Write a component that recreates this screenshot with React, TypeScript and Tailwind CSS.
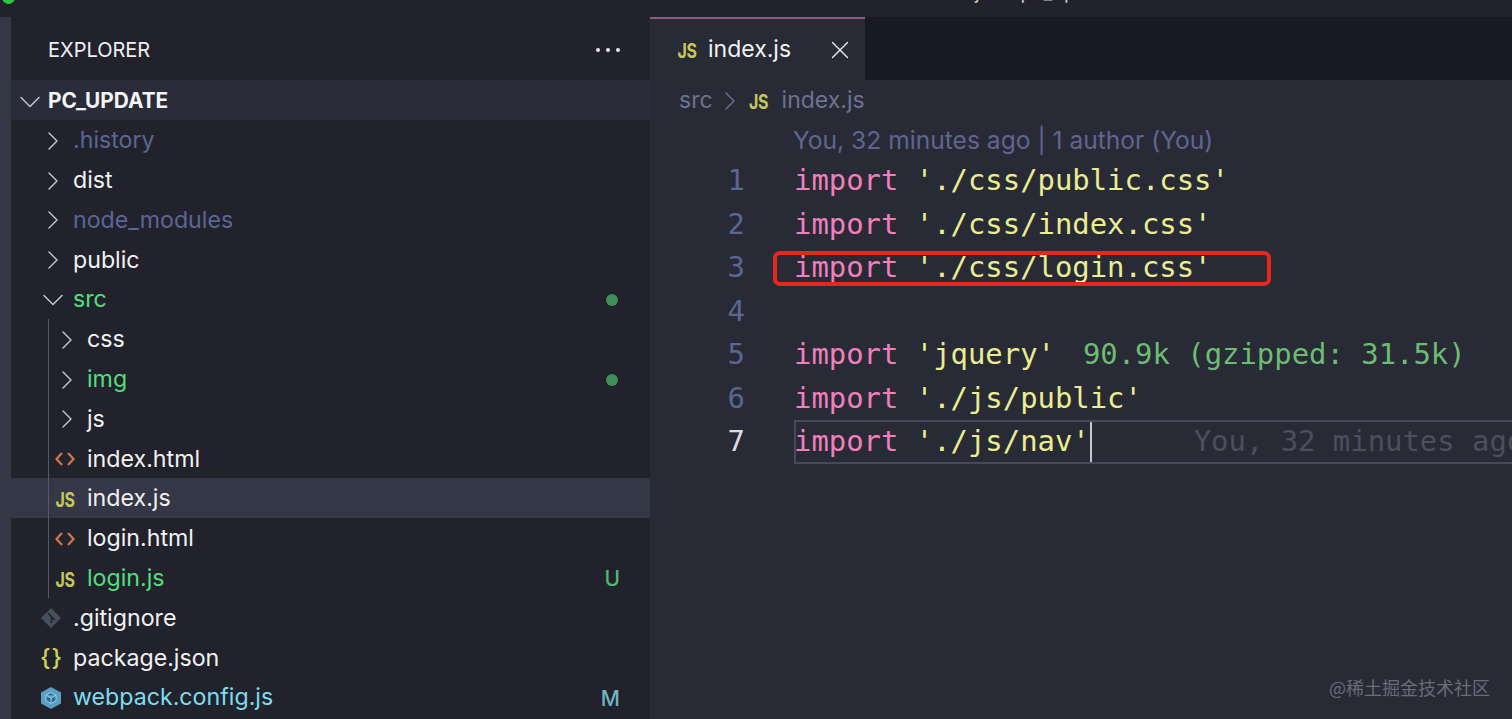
import { ChevronDown, ChevronRight, X } from "lucide-react";

const UI_FONT = "font-['Inter','Liberation_Sans',sans-serif]";

function JsIcon({ className = "" }: { className?: string }) {
  return (
    <span className={`w-[22px] scale-y-125 text-center text-[16px] font-bold leading-none tracking-[-0.3px] text-[#c5c75c] ${className}`}>
      JS
    </span>
  );
}

function HtmlIcon() {
  return (
    <svg width="22" height="18" viewBox="0 0 22 18" fill="none" stroke="#d2764a" strokeWidth="2.2">
      <path d="M8 3 2.5 9 8 15" />
      <path d="M14 3 19.5 9 14 15" />
    </svg>
  );
}

function GitIcon() {
  return (
    <svg width="22" height="22" viewBox="0 0 22 22">
      <path d="M11 1 21 11 11 21 1 11Z" fill="#46505c" />
      <path d="M8 6 11.5 9.5V16M11.5 10 15 13" stroke="#21222c" strokeWidth="1.6" fill="none" />
    </svg>
  );
}

function BracesIcon() {
  return (
    <span className="flex w-[22px] justify-between text-[24px] font-medium leading-none text-[#cfd05a]">
      <span>{"{"}</span>
      <span>{"}"}</span>
    </span>
  );
}

function WebpackIcon() {
  return (
    <svg width="22" height="24" viewBox="0 0 22 24">
      <path d="M11 1 21 6.500V17.500L11 23 1 17.500V6.500Z" fill="#5a9fc4" />
      <path d="M11 6.500 16 9.300V14.800L11 17.500 6 14.800V9.300Z M6 9.300 11 12 16 9.300 M11 12V17.500" fill="#2f6f94" stroke="#a5d6ee" strokeWidth="0.9" />
    </svg>
  );
}

type Row = {
  name: string;
  depth: 0 | 1;
  kind: "closed" | "open" | "html" | "js" | "git" | "json" | "webpack";
  color: string;
  badge?: string;
  badgeColor?: string;
  dot?: boolean;
  selected?: boolean;
};

const ROWS: Row[] = [
  { name: ".history", depth: 0, kind: "closed", color: "text-[#5d6594]" },
  { name: "dist", depth: 0, kind: "closed", color: "text-[#f2f2f2]" },
  { name: "node_modules", depth: 0, kind: "closed", color: "text-[#5d6594]" },
  { name: "public", depth: 0, kind: "closed", color: "text-[#f2f2f2]" },
  { name: "src", depth: 0, kind: "open", color: "text-[#53df7c]", dot: true },
  { name: "css", depth: 1, kind: "closed", color: "text-[#f2f2f2]" },
  { name: "img", depth: 1, kind: "closed", color: "text-[#53df7c]", dot: true },
  { name: "js", depth: 1, kind: "closed", color: "text-[#f2f2f2]" },
  { name: "index.html", depth: 1, kind: "html", color: "text-[#f2f2f2]" },
  { name: "index.js", depth: 1, kind: "js", color: "text-[#f2f2f2]", selected: true },
  { name: "login.html", depth: 1, kind: "html", color: "text-[#f2f2f2]" },
  { name: "login.js", depth: 1, kind: "js", color: "text-[#53df7c]", badge: "U", badgeColor: "text-[#4fb872]" },
  { name: ".gitignore", depth: 0, kind: "git", color: "text-[#f2f2f2]" },
  { name: "package.json", depth: 0, kind: "json", color: "text-[#f2f2f2]" },
  { name: "webpack.config.js", depth: 0, kind: "webpack", color: "text-[#7fdcec]", badge: "M", badgeColor: "text-[#6fb5c2]" },
];

function RowIcon({ kind }: { kind: Row["kind"] }) {
  if (kind === "closed") return <ChevronRight className="ml-[4px] h-[32px] w-[32px] shrink-0 text-[#c6c8d2]" strokeWidth={1.05} />;
  if (kind === "open") return <ChevronDown className="ml-[4px] h-[36px] w-[36px] shrink-0 text-[#c6c8d2]" strokeWidth={0.95} />;
  if (kind === "html") return <HtmlIcon />;
  if (kind === "js") return <JsIcon />;
  if (kind === "git") return <GitIcon />;
  if (kind === "json") return <BracesIcon />;
  return <WebpackIcon />;
}

function TreeRow({ row }: { row: Row }) {
  return (
    <div className={`relative flex h-[39.800px] items-center pr-[30px] pt-[2px] ${row.selected ? "bg-[#343746]" : ""}`}>
      {row.depth === 1 && <span className="absolute left-[37px] top-0 h-full w-[1px] bg-[#565a68]" />}
      <div className={`flex w-[24px] shrink-0 justify-center ${row.depth === 1 ? "ml-[42px]" : "ml-[28px]"}`}>
        <RowIcon kind={row.kind} />
      </div>
      <span className={`ml-[10px] text-[23.200px] leading-none ${row.color}`}>{row.name}</span>
      <div className="flex-1" />
      {row.dot && <span className="mr-[2px] h-[12px] w-[12px] rounded-full bg-[#3f8f5c]" />}
      {row.badge && <span className={`text-[21px] font-medium leading-none ${row.badgeColor}`}>{row.badge}</span>}
    </div>
  );
}

function Sidebar() {
  return (
    <aside className="flex w-[639px] shrink-0 flex-col bg-[#21222c]">
      <div className="flex h-[63px] shrink-0 items-center justify-between pl-[37px] pr-[30px] pt-[2px]">
        <span className="text-[20px] leading-none text-[#f0f0f0]">EXPLORER</span>
        <span className="flex gap-[6px]">
          <i className="h-[4px] w-[4px] rounded-full bg-[#e8e8e8]" />
          <i className="h-[4px] w-[4px] rounded-full bg-[#e8e8e8]" />
          <i className="h-[4px] w-[4px] rounded-full bg-[#e8e8e8]" />
        </span>
      </div>
      <div className="flex h-[40px] shrink-0 items-center bg-[#2a2c39] pl-[7px] pt-[3px]">
        <div className="flex w-[24px] shrink-0 justify-center">
          <ChevronDown className="h-[36px] w-[36px] shrink-0 text-[#c6c8d2]" strokeWidth={0.95} />
        </div>
        <span className="ml-[6px] text-[20.800px] font-bold leading-none text-[#f4f4f4]">PC_UPDATE</span>
      </div>
      {ROWS.map((r) => (
        <TreeRow key={r.name} row={r} />
      ))}
    </aside>
  );
}

function CodeLine({ path, children }: { path: string; children?: React.ReactNode }) {
  return (
    <div className="h-[43.500px] whitespace-pre leading-[43.500px] text-[#e9ee8f]">
      <span className="text-[#f07fbc]">import</span> {path}
      {children}
    </div>
  );
}

function Editor() {
  return (
    <main className="flex min-w-0 flex-1 flex-col bg-[#282a36]">
      <div className="flex h-[63px] shrink-0 bg-[#191a21]">
        <div className="flex w-[215px] items-center border-t-[2px] border-[#8a5a80] bg-[#282a36] pl-[26px]">
          <JsIcon />
          <span className="ml-[10px] text-[23px] leading-none text-[#f2f2f2]">index.js</span>
          <X className="ml-[34px] h-[30px] w-[30px] shrink-0 text-[#e8e8e8]" strokeWidth={1.1} />
        </div>
      </div>
      <div className="flex h-[40px] shrink-0 items-center pl-[29px] pt-[1px] text-[23px] leading-none text-[#6d7391]">
        <span>src</span>
        <ChevronRight className="ml-[1px] h-[32px] w-[32px] shrink-0" strokeWidth={1} />
        <JsIcon className="ml-[2px]" />
        <span className="ml-[12px]">index.js</span>
      </div>
      <div className="h-[39px] shrink-0 pl-[143px] text-[24.600px] leading-[40px] text-[#5f6690]">
        You, 32 minutes ago | 1 author (You)
      </div>
      <div className="relative flex font-['DejaVu_Sans_Mono','Liberation_Mono',monospace] text-[28.900px]">
        <div className="w-[95px] shrink-0 text-right text-[#5d6594]">
          {[1, 2, 3, 4, 5, 6].map((n) => (
            <div key={n} className="h-[43.500px] leading-[43.500px]">
              {n}
            </div>
          ))}
          <div className="h-[43.500px] leading-[43.500px] text-[#dcdcdc]">7</div>
        </div>
        <div className="ml-[49px] min-w-0 flex-1 overflow-hidden">
          <CodeLine path="'./css/public.css'" />
          <CodeLine path="'./css/index.css'" />
          <CodeLine path="'./css/login.css'" />
          <div className="h-[43.500px]" />
          <CodeLine path="'jquery'">
            <span className="ml-[28px] text-[#6cbd72]">90.9k (gzipped: 31.5k)</span>
          </CodeLine>
          <CodeLine path="'./js/public'" />
          <div className="flex h-[43.500px] items-center whitespace-pre border-y-[2px] border-[#474a58] text-[#e9ee8f] shadow-[inset_2px_0_0_#474a58]">
            <span className="shrink-0">
              <span className="text-[#f07fbc]">import</span> './js/nav'
            </span>
            <span className="h-full w-[2px] shrink-0 bg-[#c4c6ce]" />
            <span className="ml-[102px] shrink-0 text-[#4c4f5c]">You, 32 minutes ago</span>
          </div>
        </div>
        {/* annotation drawn over the code */}
        <div className="absolute left-[123px] top-[92px] h-[35px] w-[498px] rounded-[7px] border-[4px] border-[#e5281f]" />
      </div>
    </main>
  );
}

export default function App() {
  return (
    <div className={`relative flex h-[719px] w-[1512px] flex-col overflow-hidden bg-[#21222c] ${UI_FONT}`}>
      <div className="flex h-[17px] shrink-0 items-start justify-center overflow-hidden bg-[#21222c]">
        <span className="ml-[524px] -mt-[20px] text-[19.500px] leading-[24px] text-[#c8c8c8]">index.js — pc_update</span>
      </div>
      <span className="absolute left-[2px] top-[-9px] h-[13px] w-[13px] rounded-full bg-[#2bc840]" />
      <div className="flex min-h-0 flex-1">
        <div className="w-[11px] shrink-0 bg-[#343746]" />
        <Sidebar />
        <Editor />
      </div>
      <span className="absolute right-[22px] top-[676px] font-['Noto_Sans_CJK_SC',sans-serif] text-[18px] leading-[22px] text-[#6a6c76]">
        @稀土掘金技术社区
      </span>
    </div>
  );
}
